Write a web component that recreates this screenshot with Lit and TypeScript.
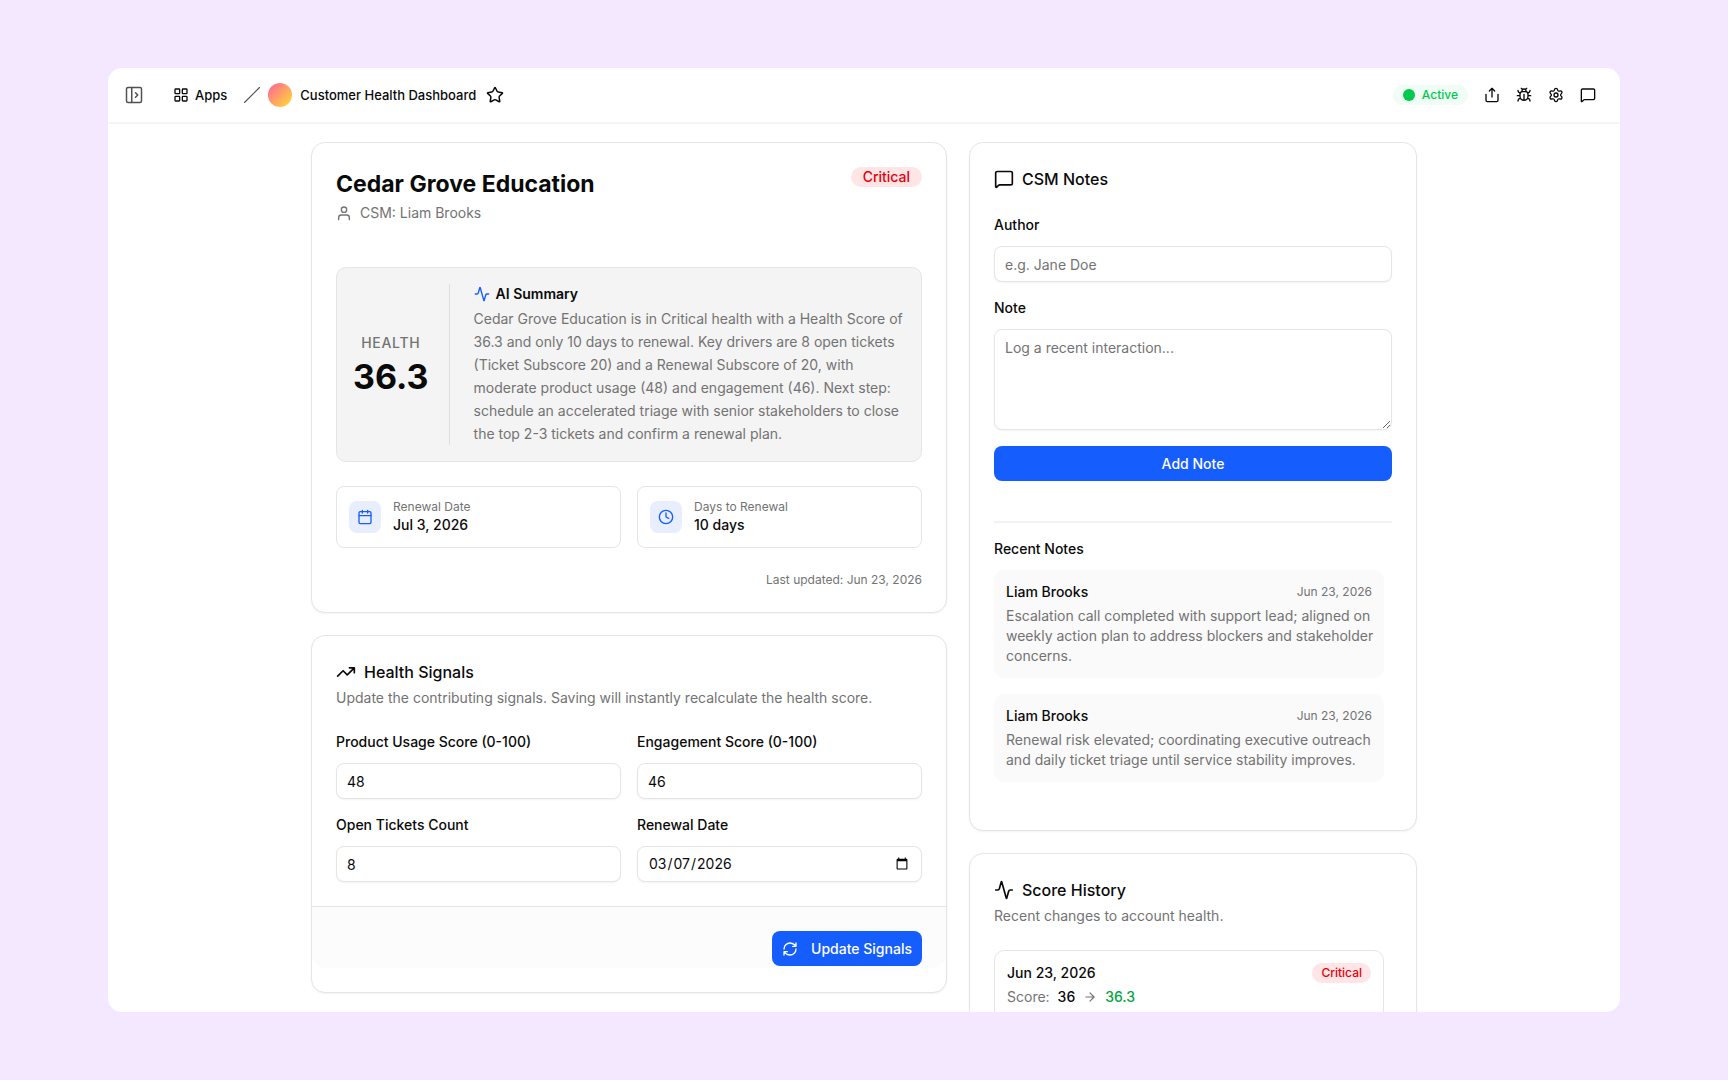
import { LitElement, html, css, svg, TemplateResult } from "lit";
import { customElement, property } from "lit/decorators.js";

const ICONS: Record<string, TemplateResult> = {
  panel: svg`<rect x="2" y="2" width="20" height="20" rx="2"/><path d="M9 2v20M14 9l3 3-3 3"/>`,
  grid: svg`<rect x="3" y="3" width="7" height="7" rx="1"/><rect x="14" y="3" width="7" height="7" rx="1"/><rect x="14" y="14" width="7" height="7" rx="1"/><rect x="3" y="14" width="7" height="7" rx="1"/>`,
  slash: svg`<path d="M22 2 2 22"/>`,
  star: svg`<path d="M11.525 2.295a.53.53 0 0 1 .95 0l2.31 4.679a2.123 2.123 0 0 0 1.595 1.16l5.166.756a.53.53 0 0 1 .294.904l-3.736 3.638a2.123 2.123 0 0 0-.611 1.878l.882 5.14a.53.53 0 0 1-.771.56l-4.618-2.428a2.122 2.122 0 0 0-1.973 0L6.396 21.01a.53.53 0 0 1-.77-.56l.881-5.139a2.122 2.122 0 0 0-.611-1.879L2.16 9.795a.53.53 0 0 1 .294-.906l5.165-.755a2.122 2.122 0 0 0 1.597-1.16z"/>`,
  share: svg`<path d="M12 2v13M16 6l-4-4-4 4M3 11v9a2 2 0 0 0 2 2h14a2 2 0 0 0 2-2v-9"/>`,
  bug: svg`<path d="M12 20v-9M14 7a4 4 0 0 1 4 4v3a6 6 0 0 1-12 0v-3a4 4 0 0 1 4-4zM14.12 3.88 16 2M21 21a4 4 0 0 0-3.81-4M21 5a4 4 0 0 1-3.55 3.97M22 13h-4M3 21a4 4 0 0 1 3.81-4M3 5a4 4 0 0 0 3.55 3.97M6 13H2M8 2l1.88 1.88M9 7.13V6a3 3 0 1 1 6 0v1.13"/>`,
  gear: svg`<path d="M9.671 4.136a2.34 2.34 0 0 1 4.659 0 2.34 2.34 0 0 0 3.319 1.915 2.34 2.34 0 0 1 2.33 4.033 2.34 2.34 0 0 0 0 3.831 2.34 2.34 0 0 1-2.33 4.033 2.34 2.34 0 0 0-3.319 1.915 2.34 2.34 0 0 1-4.659 0 2.34 2.34 0 0 0-3.32-1.915 2.34 2.34 0 0 1-2.33-4.033 2.34 2.34 0 0 0 0-3.831A2.34 2.34 0 0 1 6.35 6.051a2.34 2.34 0 0 0 3.319-1.915"/><circle cx="12" cy="12" r="3"/>`,
  message: svg`<path d="M22 17a2 2 0 0 1-2 2H6.828a2 2 0 0 0-1.414.586l-2.202 2.202A.71.71 0 0 1 2 21.286V5a2 2 0 0 1 2-2h16a2 2 0 0 1 2 2z"/>`,
  user: svg`<circle cx="12" cy="7" r="4"/><path d="M20 22v-3a4 4 0 0 0-4-4H8a4 4 0 0 0-4 4v3"/>`,
  activity: svg`<path d="M22 12h-2.48a2 2 0 0 0-1.93 1.46l-2.35 8.36a.25.25 0 0 1-.48 0L9.24 2.18a.25.25 0 0 0-.48 0l-2.35 8.36A2 2 0 0 1 4.49 12H2"/>`,
  calendar: svg`<path d="M8 2v4M16 2v4M3 10h18"/><rect x="3" y="4" width="18" height="18" rx="2"/>`,
  clock: svg`<circle cx="12" cy="12" r="10"/><path d="M12 6v6l4 2"/>`,
  trend: svg`<path d="M16 7h6v6M22 7l-8.5 8.5-5-5L2 17"/>`,
  refresh: svg`<path d="M3 12a9 9 0 0 1 9-9 9.75 9.75 0 0 1 6.74 2.74L21 8M21 3v5h-5M21 12a9 9 0 0 1-9 9 9.75 9.75 0 0 1-6.74-2.74L3 16M8 16H3v5"/>`,
  arrow: svg`<path d="M5 12h14M12 5l7 7-7 7"/>`,
};

@customElement("ui-icon")
export class UiIcon extends LitElement {
  @property() name = "";

  static styles = css`
    :host {
      display: inline-flex;
      flex: none;
      width: var(--icon-size, 16px);
      height: var(--icon-size, 16px);
    }
    .glyph {
      width: 100%;
      height: 100%;
      fill: none;
      stroke: currentColor;
      stroke-width: var(--icon-stroke, 2);
      stroke-linecap: round;
      stroke-linejoin: round;
    }
  `;

  render() {
    return html`<svg class="glyph" viewBox="0 0 24 24" aria-hidden="true">${ICONS[this.name]}</svg>`;
  }
}

interface Note {
  author: string;
  date: string;
  text: string;
}

const NOTES: Note[] = [
  {
    author: "Liam Brooks",
    date: "Jun 23, 2026",
    text: "Escalation call completed with support lead; aligned on weekly action plan to address blockers and stakeholder concerns.",
  },
  {
    author: "Liam Brooks",
    date: "Jun 23, 2026",
    text: "Renewal risk elevated; coordinating executive outreach and daily ticket triage until service stability improves.",
  },
];

const SIGNALS = [
  { id: "usage", label: "Product Usage Score (0-100)", type: "number", value: "48" },
  { id: "engagement", label: "Engagement Score (0-100)", type: "number", value: "46" },
  { id: "tickets", label: "Open Tickets Count", type: "number", value: "8" },
  { id: "renewal", label: "Renewal Date", type: "date", value: "2026-03-07" },
];

@customElement("app-root")
export class AppRoot extends LitElement {
  static styles = css`
    :host {
      display: block;
      font-family: Inter, "Liberation Sans", sans-serif;
      font-size: 14px;
      line-height: 20px;
      color: #0a0a0a;
      --muted: #737373;
      --border: #e5e5e5;
      --blue: #155dfc;
    }
    *,
    *::before,
    *::after {
      box-sizing: border-box;
    }
    h1,
    h2,
    h3,
    p {
      margin: 0;
      font-size: inherit;
      font-weight: inherit;
    }
    button,
    input,
    textarea {
      font: inherit;
      color: inherit;
    }
    .page {
      display: flex;
      height: 100vh;
      padding: 68px 108px;
      background: #f3e8ff;
    }
    .frame {
      flex: 1;
      min-width: 0;
      display: flex;
      flex-direction: column;
      overflow: hidden;
      border-radius: 14px;
      background: #fff;
    }

    /* Top bar */
    .topbar {
      flex: none;
      display: flex;
      align-items: center;
      justify-content: space-between;
      height: 56px;
      padding: 0 24px 0 17px;
      border-bottom: 2px solid #f5f5f5;
      font-size: 13px;
      font-weight: 500;
    }
    .crumbs,
    .tools,
    .crumb {
      display: flex;
      align-items: center;
    }
    .crumb {
      gap: 8px;
      color: inherit;
      text-decoration: none;
    }
    .apps {
      gap: 6px;
      margin-left: 30px;
    }
    .slash {
      margin: 0 7px 0 16px;
      color: #525252;
      --icon-size: 18px;
      --icon-stroke: 1.5;
    }
    .avatar {
      width: 24px;
      height: 24px;
      border-radius: 50%;
      background: linear-gradient(135deg, #ff6b8f 10%, #ffd43b 90%);
    }
    .icon-btn {
      display: inline-flex;
      padding: 0;
      border: 0;
      background: none;
      cursor: pointer;
    }
    .toggle {
      color: #525252;
      --icon-size: 18px;
    }
    .fav {
      margin-left: 10px;
      --icon-size: 18px;
    }
    .tools {
      gap: 16px;
    }
    .status {
      display: flex;
      align-items: center;
      gap: 7px;
      padding: 0 10px;
      border-radius: 10px;
      background: #f0fdf4;
      color: #00c950;
      font-size: 12px;
    }
    .dot {
      width: 12px;
      height: 12px;
      border-radius: 50%;
      background: #00c950;
    }

    /* Scrolling content */
    .content {
      flex: 1;
      min-height: 0;
      overflow-y: auto;
      scrollbar-width: none;
      padding: 18px 24px 24px;
    }
    .columns {
      display: grid;
      grid-template-columns: minmax(0, 636fr) minmax(0, 448fr);
      gap: 22px;
      align-items: start;
      max-width: 1106px;
      margin: 0 auto;
    }
    .stack {
      display: flex;
      flex-direction: column;
      gap: 22px;
    }
    .card {
      padding: 24px;
      border: 1px solid var(--border);
      border-radius: 14px;
      background: #fff;
      box-shadow: 0 1px 2px rgba(0, 0, 0, 0.05);
    }
    .card-title {
      display: flex;
      align-items: center;
      gap: 8px;
      font-size: 16px;
      font-weight: 500;
      line-height: 24px;
      --icon-size: 20px;
    }
    .card-description {
      margin-top: 4px;
      color: var(--muted);
    }
    .small {
      font-size: 12px;
      line-height: 16px;
      color: var(--muted);
    }
    .strong {
      font-weight: 500;
    }
    .between {
      display: flex;
      align-items: center;
      justify-content: space-between;
      gap: 16px;
    }
    .account-head {
      align-items: flex-start;
    }
    .badge {
      padding: 0 12px;
      border-radius: 10px;
      background: #ffe5e5;
      color: #e7000b;
      font-weight: 500;
    }
    .badge-small {
      padding: 0 9px;
      font-size: 12px;
    }

    /* Account card */
    .account-name {
      font-size: 23px;
      font-weight: 700;
      line-height: 34px;
    }
    .owner {
      display: flex;
      align-items: center;
      gap: 8px;
      margin-top: 2px;
      color: var(--muted);
    }
    .summary {
      display: flex;
      margin-top: 44px;
      padding: 16px;
      border: 1px solid var(--border);
      border-radius: 10px;
      background: #f4f4f4;
    }
    .health {
      flex: none;
      display: flex;
      flex-direction: column;
      align-items: center;
      justify-content: center;
      gap: 4px;
      padding-right: 20px;
      border-right: 1px solid #dedede;
    }
    .health-label {
      color: var(--muted);
      font-weight: 500;
      letter-spacing: 0.05em;
    }
    .health-score {
      font-size: 34px;
      font-weight: 700;
      line-height: 40px;
    }
    .summary-body {
      padding-left: 24px;
    }
    .summary-title {
      display: flex;
      align-items: center;
      gap: 6px;
      font-weight: 600;
    }
    .summary-title ui-icon {
      color: var(--blue);
    }
    .summary-text {
      margin-top: 3px;
      line-height: 23px;
      color: var(--muted);
    }
    .stats,
    .fields {
      display: grid;
      grid-template-columns: repeat(2, minmax(0, 1fr));
      column-gap: 16px;
    }
    .stats {
      margin-top: 24px;
    }
    .stat {
      display: flex;
      align-items: center;
      gap: 12px;
      padding: 12px;
      border: 1px solid var(--border);
      border-radius: 8px;
    }
    .stat-icon {
      display: flex;
      padding: 8px;
      border-radius: 8px;
      background: #e8eefe;
      color: var(--blue);
    }
    .updated {
      margin-top: 24px;
      text-align: right;
    }

    /* Forms */
    .fields {
      row-gap: 16px;
      margin-top: 24px;
    }
    .field {
      display: flex;
      flex-direction: column;
      gap: 11px;
    }
    .field-label {
      font-weight: 500;
    }
    .input {
      display: block;
      width: 100%;
      height: 36px;
      padding: 4px 10px;
      border: 1px solid var(--border);
      border-radius: 8px;
      background: #fff;
      box-shadow: 0 1px 2px rgba(0, 0, 0, 0.05);
    }
    .input::placeholder {
      color: var(--muted);
      opacity: 1;
    }
    .area {
      height: 101px;
      padding: 8px 10px;
      resize: vertical;
    }
    .primary {
      display: inline-flex;
      align-items: center;
      justify-content: center;
      gap: 13px;
      height: 35px;
      padding: 0 10px;
      border: 0;
      border-radius: 8px;
      background: var(--blue);
      color: #fff;
      font-weight: 500;
      cursor: pointer;
    }
    .signals {
      padding: 24px 0;
    }
    .signals-body {
      padding: 0 24px 24px;
    }
    .signals-footer {
      display: flex;
      justify-content: flex-end;
      padding: 24px 24px 2px;
      border-top: 1px solid var(--border);
      border-radius: 0 0 14px 14px;
      background: #fcfcfc;
    }

    /* Notes */
    .note-form {
      display: flex;
      flex-direction: column;
      gap: 16px;
      margin-top: 24px;
      padding-bottom: 40px;
      border-bottom: 2px solid #f2f2f2;
    }
    .recent-title {
      margin-top: 16px;
      font-weight: 500;
    }
    .list {
      display: flex;
      flex-direction: column;
      gap: 16px;
      margin-top: 11px;
      padding: 0 8px 24px 0;
    }
    .note {
      padding: 12px;
      border-radius: 10px;
      background: #fafafa;
    }
    .note-text {
      margin: 4px -8px 0 0;
      color: var(--muted);
    }
    .history {
      margin-top: 24px;
      padding-right: 8px;
    }
    .entry {
      padding: 12px;
      border: 1px solid var(--border);
      border-radius: 10px;
    }
    .score {
      display: flex;
      align-items: center;
      gap: 8px;
      margin-top: 4px;
      color: var(--muted);
      --icon-size: 14px;
    }
    .score-old {
      color: #0a0a0a;
      font-weight: 500;
    }
    .score-new {
      color: #00a63e;
      font-weight: 500;
    }
  `;

  private topbar() {
    return html`
      <header class="topbar">
        <nav class="crumbs" aria-label="Breadcrumb">
          <button class="icon-btn toggle" aria-label="Toggle sidebar"><ui-icon name="panel"></ui-icon></button>
          <a class="crumb apps" href="#apps"><ui-icon name="grid"></ui-icon>Apps</a>
          <ui-icon class="slash" name="slash"></ui-icon>
          <a class="crumb" href="#dashboard"><span class="avatar"></span>Customer Health Dashboard</a>
          <button class="icon-btn fav" aria-label="Favourite"><ui-icon name="star"></ui-icon></button>
        </nav>
        <div class="tools">
          <span class="status"><span class="dot"></span>Active</span>
          <button class="icon-btn" aria-label="Share"><ui-icon name="share"></ui-icon></button>
          <button class="icon-btn" aria-label="Report a bug"><ui-icon name="bug"></ui-icon></button>
          <button class="icon-btn" aria-label="Settings"><ui-icon name="gear"></ui-icon></button>
          <button class="icon-btn" aria-label="Comments"><ui-icon name="message"></ui-icon></button>
        </div>
      </header>
    `;
  }

  private stat(icon: string, label: string, value: string) {
    return html`
      <div class="stat">
        <span class="stat-icon"><ui-icon name=${icon}></ui-icon></span>
        <div>
          <p class="small">${label}</p>
          <p class="strong">${value}</p>
        </div>
      </div>
    `;
  }

  private account() {
    return html`
      <section class="card">
        <div class="between account-head">
          <div>
            <h1 class="account-name">Cedar Grove Education</h1>
            <p class="owner"><ui-icon name="user"></ui-icon>CSM: Liam Brooks</p>
          </div>
          <span class="badge">Critical</span>
        </div>
        <div class="summary">
          <div class="health">
            <span class="health-label">HEALTH</span>
            <span class="health-score">36.3</span>
          </div>
          <div class="summary-body">
            <h2 class="summary-title"><ui-icon name="activity"></ui-icon>AI Summary</h2>
            <p class="summary-text">
              Cedar Grove Education is in Critical health with a Health Score of 36.3 and only 10 days to renewal. Key
              drivers are 8 open tickets (Ticket Subscore 20) and a Renewal Subscore of 20, with moderate product usage
              (48) and engagement (46). Next step: schedule an accelerated triage with senior stakeholders to close the
              top 2-3 tickets and confirm a renewal plan.
            </p>
          </div>
        </div>
        <div class="stats">
          ${this.stat("calendar", "Renewal Date", "Jul 3, 2026")} ${this.stat("clock", "Days to Renewal", "10 days")}
        </div>
        <p class="small updated">Last updated: Jun 23, 2026</p>
      </section>
    `;
  }

  private signals() {
    return html`
      <section class="card signals">
        <div class="signals-body">
          <h2 class="card-title"><ui-icon name="trend"></ui-icon>Health Signals</h2>
          <p class="card-description">
            Update the contributing signals. Saving will instantly recalculate the health score.
          </p>
          <div class="fields">
            ${SIGNALS.map(
              (s) => html`
                <div class="field">
                  <label class="field-label" for=${s.id}>${s.label}</label>
                  <input class="input" id=${s.id} type=${s.type} .value=${s.value} />
                </div>
              `
            )}
          </div>
        </div>
        <div class="signals-footer">
          <button class="primary"><ui-icon name="refresh"></ui-icon>Update Signals</button>
        </div>
      </section>
    `;
  }

  private notes() {
    return html`
      <section class="card">
        <h2 class="card-title"><ui-icon name="message"></ui-icon>CSM Notes</h2>
        <div class="note-form">
          <div class="field">
            <label class="field-label" for="author">Author</label>
            <input class="input" id="author" type="text" placeholder="e.g. Jane Doe" />
          </div>
          <div class="field">
            <label class="field-label" for="note">Note</label>
            <textarea class="input area" id="note" placeholder="Log a recent interaction..."></textarea>
          </div>
          <button class="primary">Add Note</button>
        </div>
        <h3 class="recent-title">Recent Notes</h3>
        <div class="list">
          ${NOTES.map(
            (n) => html`
              <article class="note">
                <div class="between">
                  <span class="strong">${n.author}</span>
                  <time class="small">${n.date}</time>
                </div>
                <p class="note-text">${n.text}</p>
              </article>
            `
          )}
        </div>
      </section>
    `;
  }

  private history() {
    return html`
      <section class="card">
        <h2 class="card-title"><ui-icon name="activity"></ui-icon>Score History</h2>
        <p class="card-description">Recent changes to account health.</p>
        <div class="history">
          <article class="entry">
            <div class="between">
              <span class="strong">Jun 23, 2026</span>
              <span class="badge badge-small">Critical</span>
            </div>
            <p class="score">
              Score: <span class="score-old">36</span><ui-icon name="arrow"></ui-icon
              ><span class="score-new">36.3</span>
            </p>
          </article>
        </div>
      </section>
    `;
  }

  render() {
    return html`
      <div class="page">
        <div class="frame">
          ${this.topbar()}
          <main class="content">
            <div class="columns">
              <div class="stack">${this.account()}${this.signals()}</div>
              <div class="stack">${this.notes()}${this.history()}</div>
            </div>
          </main>
        </div>
      </div>
    `;
  }
}
